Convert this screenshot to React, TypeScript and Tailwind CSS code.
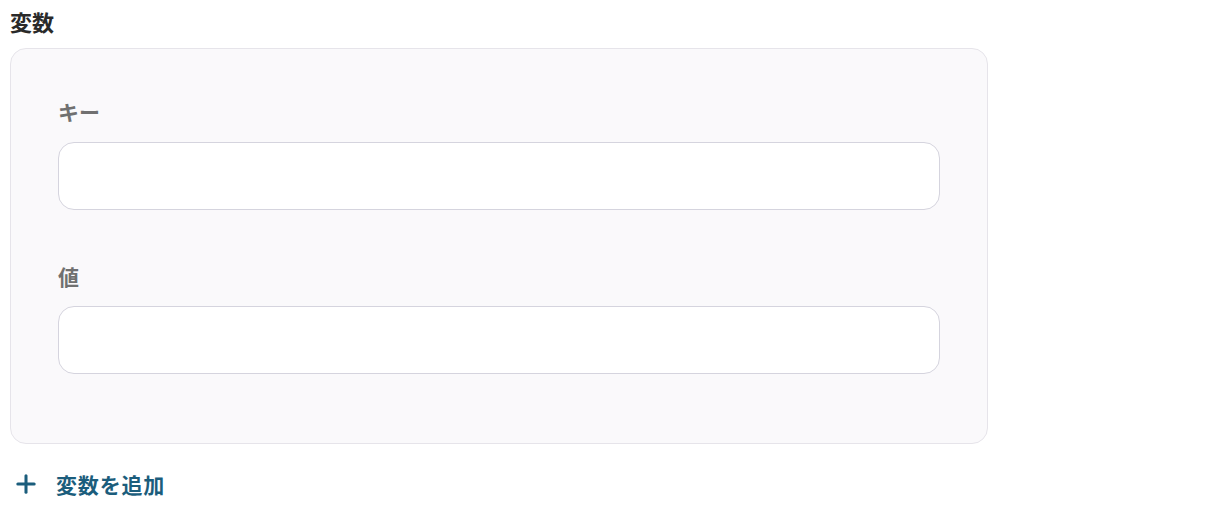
import { Plus } from "lucide-react";

export default function App() {
  return (
    <div
      className="min-h-screen bg-white pl-[10px] pt-[7px]"
      style={{ fontFamily: '"Noto Sans CJK JP", "Noto Sans", sans-serif' }}
    >
      <h2 className="text-[22px] font-bold leading-[28px] text-[#2a2a2a]">変数</h2>

      {/* Variable card */}
      <div className="mt-[13px] w-[978px] rounded-[16px] border border-[#e6e4ea] bg-[#faf9fb] px-[47px] pt-[48px] pb-[69px]">
        <label className="block text-[21px] font-bold leading-[28px] text-[#707070]">キー</label>
        <input
          type="text"
          className="mt-[17px] block h-[68px] w-[882px] rounded-[16px] border border-[#d5d4de] bg-white px-4 outline-none"
        />

        <label className="mt-[52px] block text-[21px] font-bold leading-[28px] text-[#707070]">値</label>
        <input
          type="text"
          className="mt-[16px] block h-[68px] w-[882px] rounded-[16px] border border-[#d5d4de] bg-white px-4 outline-none"
        />
      </div>

      {/* Add button */}
      <button
        type="button"
        className="mt-[26px] flex items-center gap-[16px] pl-[2px] text-[#1b5d7c]"
      >
        <Plus className="h-[28px] w-[28px]" strokeWidth={2.6} />
        <span className="text-[21px] font-bold leading-[28px] tracking-[0.04em]">変数を追加</span>
      </button>
    </div>
  );
}
